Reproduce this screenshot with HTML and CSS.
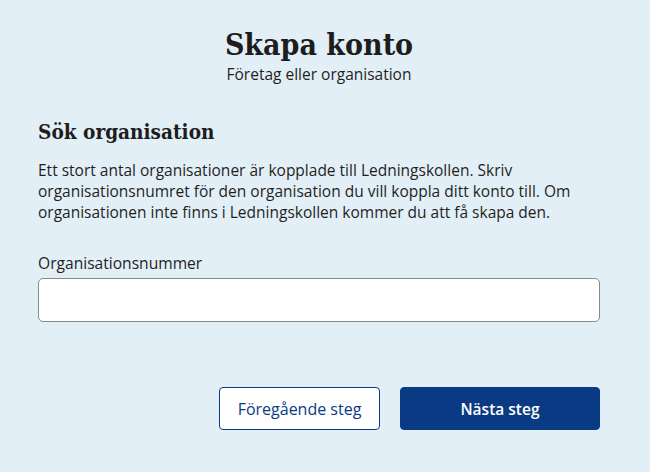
FILE: index.html
```html
<!DOCTYPE html>
<html lang="sv">
<head>
<meta charset="utf-8">
<title>Skapa konto</title>
<link rel="stylesheet" href="styles.css">
</head>
<body>
<main class="page">
  <header class="head">
    <h1 class="title">Skapa konto</h1>
    <p class="subtitle">Företag eller organisation</p>
  </header>
  <section class="section">
    <h2 class="section-title">Sök organisation</h2>
    <p class="lead">Ett stort antal organisationer är kopplade till Ledningskollen. Skriv organisationsnumret för den organisation du vill koppla ditt konto till. Om organisationen inte finns i Ledningskollen kommer du att få skapa den.</p>
    <label class="field">
      <span class="field-label">Organisationsnummer</span>
      <input class="field-input" type="text">
    </label>
  </section>
  <div class="actions">
    <button class="btn btn-secondary" type="button">Föregående steg</button>
    <button class="btn btn-primary" type="button">Nästa steg</button>
  </div>
</main>
</body>
</html>
```
FILE: styles.css
```css
html, body {
  margin: 0;
  padding: 0;
  background: #e3eff6;
}
body {
  font-family: "Open Sans", "Noto Sans", sans-serif;
  color: #1f1f1f;
}
.page {
  width: 562px;
  margin-left: 38px;
  padding-top: 26px;
}
.head {
  text-align: center;
}
.title {
  margin: 0;
  font-family: "DejaVu Serif", serif;
  font-stretch: condensed;
  font-weight: 700;
  font-size: 30px;
  line-height: 38px;
  color: #1d1d1d;
}
.subtitle {
  margin: 0;
  font-size: 15.5px;
  line-height: 20px;
}
.section {
  margin-top: 34px;
}
.section-title {
  margin: 0;
  font-family: "DejaVu Serif", serif;
  font-stretch: condensed;
  font-weight: 700;
  font-size: 20.6px;
  line-height: 28px;
  color: #1d1d1d;
}
.lead {
  margin: 14px 0 0;
  font-size: 15.5px;
  line-height: 21px;
}
.field {
  display: flex;
  flex-direction: column;
  margin-top: 29px;
}
.field-label {
  font-size: 15.6px;
  line-height: 22px;
  margin-bottom: 4px;
}
.field-input {
  box-sizing: border-box;
  height: 44px;
  width: 100%;
  border: 1px solid #8a8a8a;
  border-radius: 5px;
  background: #fff;
  font: inherit;
  padding: 0 12px;
}
.actions {
  display: flex;
  justify-content: flex-end;
  gap: 20px;
  margin-top: 65px;
}
.btn {
  box-sizing: border-box;
  height: 43px;
  border-radius: 4px;
  font-family: "Open Sans", sans-serif;
  font-size: 15.5px;
  cursor: pointer;
}
.btn-secondary {
  width: 161px;
  background: #fff;
  border: 1px solid #0b3a84;
  color: #0b3a84;
  font-size: 16px;
  font-weight: 400;
}
.btn-primary {
  width: 200px;
  background: #0b3a84;
  border: 1px solid #0b3a84;
  color: #fff;
  font-weight: 600;
}
```
